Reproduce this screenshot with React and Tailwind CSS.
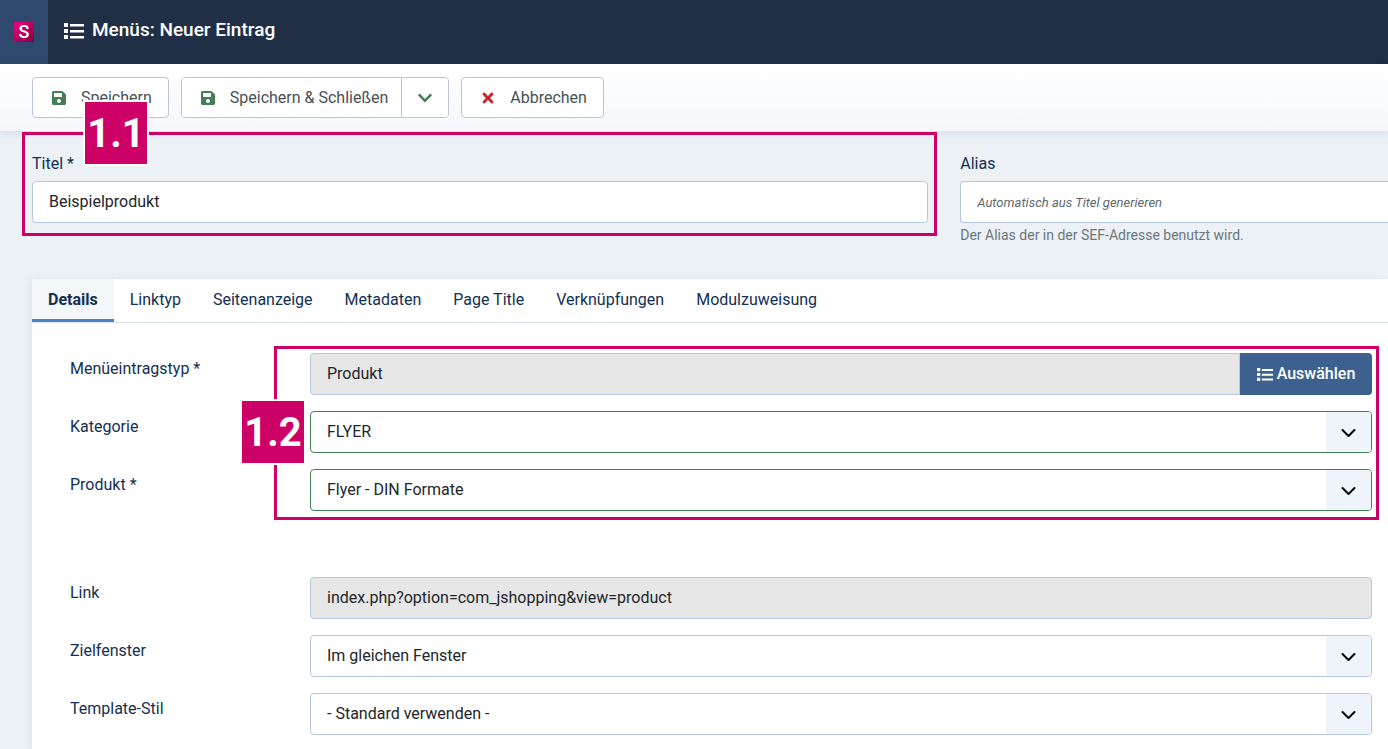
import { useState } from 'react'
import { FaChevronDown, FaSave, FaTimes } from 'react-icons/fa'

const TABS = ['Details', 'Linktyp', 'Seitenanzeige', 'Metadaten', 'Page Title', 'Verknüpfungen', 'Modulzuweisung']

const LABEL = 'text-base leading-6 text-[#132f53]'
const FIELD = 'h-[42px] w-full min-w-0 rounded border px-4 text-base text-[#22262a]'

function ListIcon({ className }) {
  return (
    <svg viewBox="0 0 20 16" className={className} fill="currentColor" aria-hidden="true">
      <path d="M0 0h4v4H0zM0 6h4v4H0zM0 12h4v4H0z" />
      <path d="M6 1h14v2.5H6zM6 7h14v2.5H6zM6 13h14v2.5H6z" />
    </svg>
  )
}

function Frame({ className }) {
  return <div className={`pointer-events-none absolute z-20 border-3 border-[#cc0066] ${className}`} />
}

function Marker({ className, children }) {
  return (
    <span className={`pointer-events-none absolute z-30 flex size-[62px] items-center justify-center bg-[#cc0066] pt-[2px] text-[40px] leading-none font-bold text-white outline-2 outline-white ${className}`}>
      {children}
    </span>
  )
}

function FormRow({ id, label, children }) {
  return (
    <div className="flex">
      <label htmlFor={id} className={`w-60 shrink-0 pt-1 ${LABEL}`}>{label}</label>
      <div className="flex min-w-0 flex-1">{children}</div>
    </div>
  )
}

function SelectField({ id, options, valid }) {
  return (
    <div className="relative w-full">
      <select
        id={id}
        className={`${FIELD} appearance-none bg-white pr-14 ${valid ? 'border-[#438057]' : 'border-[#b6c7e3]'}`}
      >
        {options.map(o => <option key={o}>{o}</option>)}
      </select>
      <span className="pointer-events-none absolute inset-y-px right-px flex w-[45px] items-center justify-center rounded-r-[3px] bg-[#eff4fb] pt-px">
        <svg viewBox="0 0 16 16" className="size-4" fill="none" stroke="#000" strokeWidth="2" strokeLinecap="round" strokeLinejoin="round">
          <path d="M1.5 5l6 6 6-6" />
        </svg>
      </span>
    </div>
  )
}

function Header() {
  return (
    <header className="flex h-16 bg-[#202f46]">
      <a href="#" aria-label="Startseite" className="flex w-12 items-center justify-center bg-[#2f486d]">
        <span className="flex size-5 items-center justify-center bg-linear-to-br from-[#f0047f] to-[#800040] text-lg leading-5 font-medium text-white">S</span>
      </a>
      <h1 className="flex items-center gap-2 pb-[3px] pl-4 text-[19px] font-medium text-white">
        <ListIcon className="h-4 w-5" />
        Menüs: Neuer Eintrag
      </h1>
    </header>
  )
}

function Toolbar() {
  const btn = 'flex items-center gap-[14px] bg-white pl-[18px] text-base text-[#495057]'
  return (
    <div className="relative z-10 flex gap-3 bg-linear-to-b from-white to-[#f5f7fb] px-8 py-[13px] shadow-[0_2px_8px_rgba(20,50,110,0.1)]">
      <button type="button" className={`${btn} h-[41px] rounded border border-[#bdc5d5] pr-4`}>
        <FaSave className="size-4 text-[#457d54]" />
        Speichern
      </button>
      <div className="flex h-[41px] overflow-hidden rounded border border-[#bdc5d5]">
        <button type="button" className={`${btn} pr-[13px]`}>
          <FaSave className="size-4 text-[#457d54]" />
          Speichern &amp; Schließen
        </button>
        <button type="button" aria-label="Weitere Aktionen" className="flex w-[47px] items-center justify-center border-l border-[#bdc5d5] bg-white">
          <FaChevronDown className="size-4 text-[#457d54]" />
        </button>
      </div>
      <button type="button" className={`${btn} h-[41px] rounded border border-[#bdc5d5] pr-4`}>
        <FaTimes className="size-4 text-[#c52827]" />
        Abbrechen
      </button>
    </div>
  )
}

export default function App() {
  const [activeTab, setActiveTab] = useState('Details')

  return (
    <div className="flex min-h-screen flex-col overflow-x-hidden bg-[#ebf1f5] font-['Roboto',sans-serif]">
      <Header />
      <Toolbar />

      <main className="flex flex-1 flex-col pt-[21px] pl-8">
        <div className="grid grid-cols-[44fr_21fr] gap-8">
          <div className="relative flex flex-col gap-[5px] self-start">
            <label htmlFor="title" className={LABEL}>Titel *</label>
            <input id="title" type="text" defaultValue="Beispielprodukt" className={`${FIELD} border-[#b6c7e3] bg-white pb-[2px]`} />
            <Frame className="-top-5 -right-[9px] -bottom-[13px] -left-[10px]" />
            <Marker className="-top-[50px] left-[53px]">1.1</Marker>
          </div>

          <div>
            <label htmlFor="alias" className={`mb-[5px] block ${LABEL}`}>Alias</label>
            <input
              id="alias"
              type="text"
              placeholder="Automatisch aus Titel generieren"
              className="block h-[42px] w-full rounded-l border border-r-0 border-[#b6c7e3] bg-white px-4 pb-[2px] text-base placeholder:text-[13px] placeholder:text-[#60676e] placeholder:italic"
            />
            <p className="mt-[2px] text-sm text-[#6d757d]">Der Alias der in der SEF-Adresse benutzt wird.</p>
          </div>
        </div>

        <section className="mt-[34px] flex-1 bg-white shadow-[0_2px_10px_rgba(20,50,110,0.08)]">
          <div role="tablist" className="flex border-b border-[#dbe2ee]">
            {TABS.map(tab => (
              <button
                key={tab}
                type="button"
                role="tab"
                aria-selected={activeTab === tab}
                onClick={() => setActiveTab(tab)}
                className={activeTab === tab
                  ? 'h-[43px] border-b-3 border-[#4f81c4] bg-[#f3f7fa] px-4 pt-[2px] text-base font-bold text-[#132f53]'
                  : 'h-[43px] border-b-3 border-transparent px-4 pt-[2px] text-base text-[#132f53]'
                }
              >
                {tab}
              </button>
            ))}
          </div>

          <div className="pt-[30px] pr-4 pb-3 pl-[38px]">
            <div className="relative flex flex-col gap-4">
              <FormRow id="item-type" label="Menüeintragstyp *">
                <input id="item-type" type="text" readOnly value="Produkt" className="h-[42px] min-w-0 flex-1 rounded-l border border-[#b6c7e3] bg-[#e7e7e7] px-4 pb-[2px] text-base text-[#22262a]" />
                <button type="button" className="flex h-[42px] w-[132px] items-center justify-center gap-1 rounded-r bg-[#3d618f] text-base font-medium text-white">
                  <ListIcon className="h-[13px] w-4" />
                  Auswählen
                </button>
              </FormRow>
              <FormRow id="category" label="Kategorie">
                <SelectField id="category" valid options={['FLYER']} />
              </FormRow>
              <FormRow id="product" label="Produkt *">
                <SelectField id="product" valid options={['Flyer - DIN Formate']} />
              </FormRow>
              <Frame className="-top-[7px] -right-[7px] -bottom-[9px] left-[204px]" />
              <Marker className="top-12 left-[172px]">1.2</Marker>
            </div>

            <div className="mt-[66px] flex flex-col gap-4">
              <FormRow id="link" label="Link">
                <input id="link" type="text" readOnly value="index.php?option=com_jshopping&view=product" className={`${FIELD} border-[#b6c7e3] bg-[#e7e7e7] pb-[2px]`} />
              </FormRow>
              <FormRow id="target" label="Zielfenster">
                <SelectField id="target" options={['Im gleichen Fenster', 'Neues Fenster']} />
              </FormRow>
              <FormRow id="template" label="Template-Stil">
                <SelectField id="template" options={['- Standard verwenden -']} />
              </FormRow>
            </div>
          </div>
        </section>
      </main>
    </div>
  )
}
